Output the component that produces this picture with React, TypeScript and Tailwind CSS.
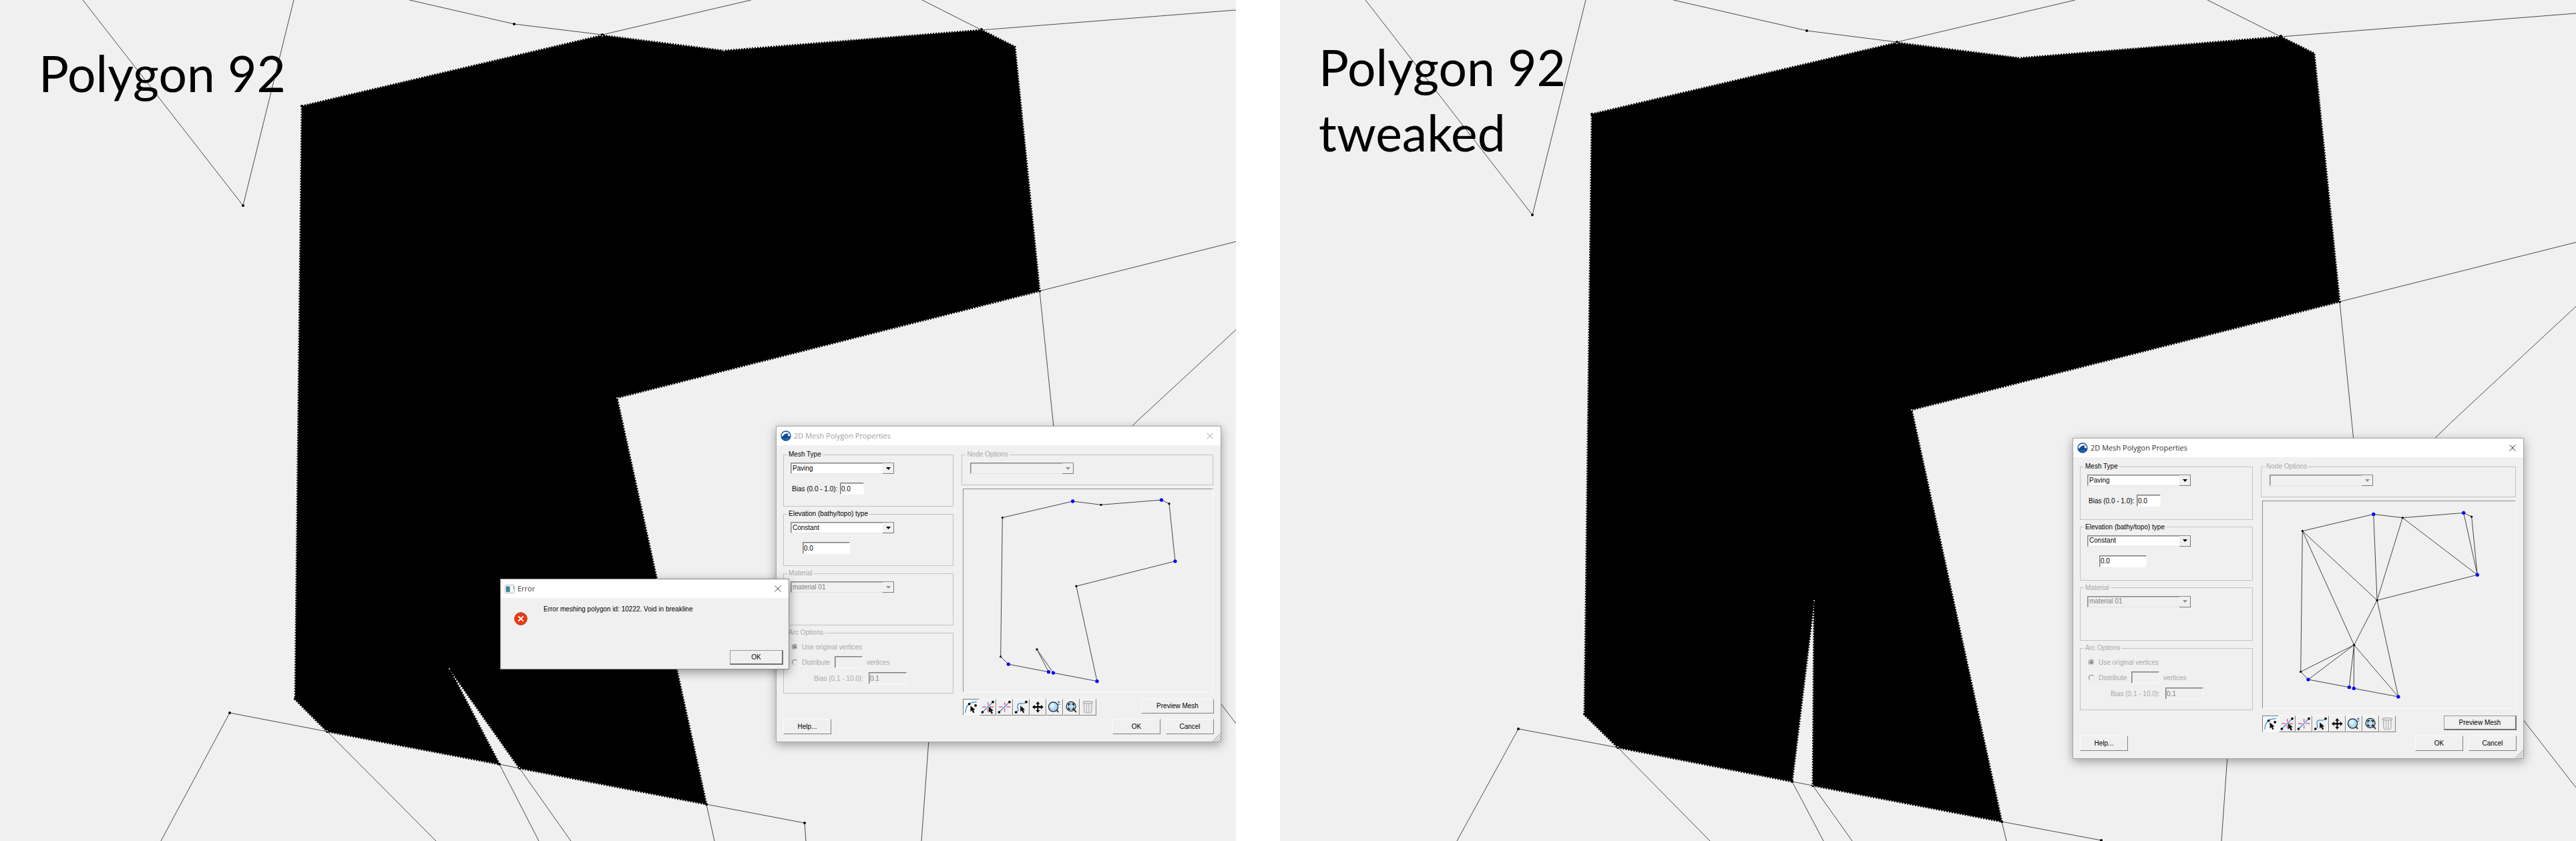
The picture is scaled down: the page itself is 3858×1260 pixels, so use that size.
import type { ReactNode } from "react";

type Pt = [number, number];

const toPoints = (pts: Pt[]) => pts.map((p) => p.join(",")).join(" ");

/* ---------- Map canvas ---------- */

type MapData = { viewBox: string; polygon: Pt[]; lines: Pt[][]; nodes: Pt[]; corners: Pt[] };

const originalMap: MapData = {
  viewBox: "0 0 1851 1260",
  polygon: [
    [452, 159], [902, 53], [1084, 76], [1470, 45], [1520, 70], [1557, 436], [924, 596],
    [1058, 1205], [778, 1151], [673, 1002], [748, 1145], [490, 1096], [442, 1048],
  ],
  lines: [
    [[124, 0], [364, 308], [440, 0]],
    [[613, 0], [770, 36], [902, 52], [1125, 0]],
    [[1381, 0], [1470, 45], [1851, 15]],
    [[1851, 362], [1557, 436], [1578, 640]],
    [[1851, 494], [1704, 630], [1694, 640]],
    [[241, 1260], [344, 1068], [490, 1096], [653, 1260]],
    [[807, 1260], [748, 1145], [778, 1151], [855, 1260]],
    [[1070, 1260], [1058, 1205], [1205, 1233], [1207, 1260]],
    [[1391, 1108], [1380, 1260]],
    [[1826, 1051], [1851, 1084]],
  ],
  nodes: [
    [364, 308], [770, 36], [902, 52], [1470, 44], [1557, 436], [344, 1068], [490, 1096],
    [748, 1145], [778, 1151], [1058, 1205], [1205, 1233], [442, 1047], [452, 159],
  ],
  corners: [[902, 54], [1084, 76], [1557, 434], [924, 596], [673, 1002], [490, 1095], [778, 1150]],
};

const tweakedMap: MapData = {
  viewBox: "0 0 1941 1260",
  polygon: [
    [467, 171], [924, 64], [1108, 87], [1499, 55], [1549, 80], [1587, 452], [946, 614],
    [1081, 1231], [798, 1177], [800, 900], [767, 1171], [506, 1120], [456, 1071],
  ],
  lines: [
    [[128, 0], [378, 322], [458, 0]],
    [[589, 0], [789, 46], [924, 63], [1191, 0]],
    [[1389, 0], [1499, 55], [1941, 20]],
    [[1941, 363], [1587, 452], [1608, 660]],
    [[1941, 459], [1757, 630], [1726, 660]],
    [[265, 1260], [357, 1092], [506, 1120], [644, 1260]],
    [[814, 1260], [767, 1171], [798, 1177], [857, 1260]],
    [[1088, 1260], [1081, 1231], [1230, 1259]],
    [[1419, 1132], [1410, 1260]],
    [[1860, 1076], [1941, 1180]],
  ],
  nodes: [
    [378, 322], [789, 46], [924, 63], [1499, 54], [1587, 452], [357, 1092], [506, 1120],
    [767, 1171], [798, 1177], [1081, 1231], [1230, 1259], [456, 1070], [467, 171],
  ],
  corners: [[924, 65], [1108, 87], [1587, 450], [946, 614], [800, 900], [506, 1119], [798, 1176]],
};

function MapCanvas({ data }: { data: MapData }) {
  return (
    <svg
      className="absolute inset-0 h-full w-full"
      viewBox={data.viewBox}
      preserveAspectRatio="xMinYMin slice"
      aria-hidden="true"
    >
      {data.lines.map((l, i) => (
        <polyline key={i} points={toPoints(l)} fill="none" stroke="#4a4a4a" strokeWidth="1" />
      ))}
      <polygon points={toPoints(data.polygon)} fill="#000" stroke="#000" strokeWidth="3" strokeDasharray="2 2" />
      {data.nodes.map(([x, y], i) => (
        <circle key={i} cx={x} cy={y} r="2" fill="#000" />
      ))}
      {data.corners.map(([x, y], i) => (
        <circle key={i} cx={x} cy={y} r="1" fill="#f0f0f0" />
      ))}
    </svg>
  );
}

/* ---------- Preview drawings ---------- */

type PreviewData = { viewBox: string; lines: Pt[][]; blue: Pt[]; black: Pt[] };

const outlinePreview: PreviewData = {
  viewBox: "0 0 1125 912",
  lines: [[
    [176, 127], [494, 53], [622, 69], [895, 47], [930, 64], [957, 324], [510, 437], [604, 867],
    [406, 829], [332, 723], [385, 825], [203, 790], [168, 756], [176, 127],
  ]],
  blue: [[494, 53], [895, 47], [957, 324], [604, 867], [406, 829], [385, 825], [203, 790]],
  black: [[176, 127], [622, 69], [930, 64], [510, 437], [332, 723], [168, 756]],
};

const meshPreview: PreviewData = {
  viewBox: "0 0 1140 924",
  lines: [
    [
      [179, 129], [500, 53], [631, 69], [907, 47], [943, 64], [969, 327], [516, 442], [612, 878],
      [411, 840], [412, 644], [390, 835], [205, 800], [171, 765], [179, 129],
    ],
    [[179, 129], [516, 442], [500, 53]],
    [[516, 442], [631, 69], [969, 327], [907, 47]],
    [[516, 442], [412, 644], [179, 129]],
    [[171, 765], [412, 644], [205, 800]],
    [[412, 644], [612, 878]],
  ],
  blue: [[500, 53], [907, 47], [969, 327], [612, 878], [411, 840], [390, 835], [205, 800]],
  black: [[179, 129], [631, 69], [943, 64], [516, 442], [412, 644], [171, 765]],
};

function Preview({ data }: { data: PreviewData }) {
  return (
    <svg className="block h-full w-full" viewBox={data.viewBox} role="img" aria-label="Polygon preview">
      {data.lines.map((l, i) => (
        <polyline key={i} points={toPoints(l)} fill="none" stroke="#444" strokeWidth="3" />
      ))}
      {data.black.map(([x, y], i) => (
        <circle key={i} cx={x} cy={y} r="5" fill="#000" />
      ))}
      {data.blue.map(([x, y], i) => (
        <circle key={i} cx={x} cy={y} r="8" fill="#0000ff" />
      ))}
    </svg>
  );
}

/* ---------- Icons ---------- */

function AppIcon() {
  return (
    <svg className="size-4 shrink-0" viewBox="0 0 48 48" aria-hidden="true">
      <circle cx="24" cy="24" r="21" fill="#fff" stroke="#0f4f9b" strokeWidth="4" />
      <path d="M3 29C12 27 14 15 25 14C30 13 35 14 37 17C31 18 30 22 34 24C38 26 42 25 45 25C45 30 43 35 40 38H8C5 35 3 32 3 29Z" fill="#0f4f9b" />
      <path d="M10 39C18 36 30 41 38 39C30 46 18 46 10 39Z" fill="#0f4f9b" />
    </svg>
  );
}

function WindowIcon() {
  return (
    <svg className="h-[13px] w-[15px] shrink-0" viewBox="0 0 45 39" aria-hidden="true">
      <rect x="1.5" y="1.5" width="42" height="36" rx="3" fill="#eef3f7" stroke="#b4bfc8" strokeWidth="3" />
      <rect x="6" y="8" width="17" height="25" fill="#3d8f8b" />
      <rect x="6" y="8" width="8" height="12" fill="#3f6fb5" />
      <rect x="27" y="6" width="8" height="27" fill="#fff" />
      <rect x="38" y="8" width="3" height="12" fill="#6aa6ab" />
    </svg>
  );
}

function CloseIcon() {
  return (
    <svg className="size-[10px]" viewBox="0 0 10 10" aria-hidden="true">
      <path d="M0.5 0.5L9.5 9.5M9.5 0.5L0.5 9.5" stroke="currentColor" strokeWidth="1" />
    </svg>
  );
}

function Cursor({ x, y }: { x: number; y: number }) {
  return <path transform={`translate(${x} ${y})`} d="M0 0V30L7 24L13 36L20 33L14 21L23 20Z" fill="#111" />;
}

const cross = <path d="M10 36H28M47 36H66M38 13V28M38 44V60" stroke="#f0397a" strokeWidth="4" />;
const segment = (
  <>
    <path d="M11 62L62 12" stroke="#2b87cf" strokeWidth="4" />
    <circle cx="11" cy="62" r="6" />
    <circle cx="62" cy="12" r="6" />
  </>
);

const tools: { label: string; art: ReactNode }[] = [
  {
    label: "Select vertices",
    art: (
      <>
        <path d="M10 65C10 30 28 12 65 12" fill="none" stroke="#2b93dd" strokeWidth="4" />
        <circle cx="28" cy="22" r="6" />
        <circle cx="59" cy="29" r="6" />
        <Cursor x={34} y={30} />
      </>
    ),
  },
  { label: "Select split point", art: (<>{cross}{segment}<Cursor x={42} y={34} /></>) },
  { label: "Add split point", art: (<>{cross}{segment}</>) },
  {
    label: "Select arc",
    art: (
      <>
        <path d="M12 62C36 54 8 34 24 22C36 13 46 30 62 12" fill="none" stroke="#2b87cf" strokeWidth="4" />
        <circle cx="12" cy="62" r="6" />
        <circle cx="62" cy="12" r="6" />
        <Cursor x={33} y={30} />
      </>
    ),
  },
  {
    label: "Pan",
    art: (
      <path d="M37 10L47 22H40V33H52V26L64 37L52 48V41H40V52H47L37 64L27 52H34V41H22V48L10 37L22 26V33H34V22H27Z" />
    ),
  },
  {
    label: "Zoom",
    art: (
      <>
        <path d="M46 50L56 62" stroke="#444" strokeWidth="7" />
        <circle cx="31" cy="36" r="23" fill="#a9d8f8" stroke="#222" strokeWidth="4" />
        <circle cx="27" cy="30" r="12" fill="#d7effd" />
        <path d="M52 13H64M58 7V19M52 24H64" stroke="#1d56c4" strokeWidth="3" />
      </>
    ),
  },
  {
    label: "Frame",
    art: (
      <>
        <path d="M50 49L62 62" stroke="#444" strokeWidth="7" />
        <circle cx="36" cy="34" r="23" fill="#b9e0fa" stroke="#222" strokeWidth="4" />
        <path d="M24 31V22H33M40 22H49V31M49 38V47H40M33 47H24V38" fill="none" stroke="#111" strokeWidth="5" />
      </>
    ),
  },
  {
    label: "Delete",
    art: (
      <>
        <path d="M16 15L19 62C24 67 50 67 55 62L58 15Z" fill="#d4d4d4" stroke="#999" strokeWidth="2" />
        <path d="M27 20V58M37 20V60M47 20V58" stroke="#fff" strokeWidth="5" />
        <path d="M31 20V58M42 20V60" stroke="#a4a4a4" strokeWidth="3" />
        <ellipse cx="37" cy="14" rx="25" ry="6" fill="#e4e4e4" stroke="#999" strokeWidth="3" />
      </>
    ),
  },
];

/* ---------- Form controls ---------- */

const sunken =
  "border border-t-[#808080] border-l-[#808080] border-r-[#fafafa] border-b-[#fafafa] shadow-[inset_1px_1px_0_#b5b5b5]";

function Dropdown({ label, value, disabled }: { label: string; value: string; disabled?: boolean }) {
  return (
    <div className="relative h-[17px] w-[155px]">
      <select
        aria-label={label}
        disabled={disabled}
        defaultValue={value}
        className="block h-full w-full appearance-none border border-[#8a8a8a] border-b-[#e4e4e4] bg-white pl-[2px] text-[10px] leading-[14px] text-black shadow-[inset_1px_1px_0_#b5b5b5] disabled:bg-[#f0f0f0] disabled:text-[#808080] disabled:opacity-100"
      >
        <option value={value}>{value}</option>
      </select>
      <span className="pointer-events-none absolute top-[1px] right-0 bottom-0 flex w-[17px] items-center justify-center border-r border-b border-[#7a7a7a] bg-[#f0f0f0]">
        <svg className={disabled ? "h-1 w-[7px] text-[#8f8f8f]" : "h-1 w-[7px] text-black"} viewBox="0 0 7 4" aria-hidden="true">
          <path d="M0 0H7L3.5 4Z" fill="currentColor" />
        </svg>
      </span>
    </div>
  );
}

function TextBox({ id, label, value, width, disabled }: { id: string; label?: string; value: string; width: string; disabled?: boolean }) {
  return (
    <input
      id={id}
      aria-label={label}
      type="text"
      defaultValue={value}
      disabled={disabled}
      className={`h-[18px] bg-white pl-px text-[10px] leading-[16px] text-black disabled:bg-[#f0f0f0] disabled:text-[#808080] ${sunken} ${width}`}
    />
  );
}

function Radio({ name, checked }: { name: string; checked?: boolean }) {
  return (
    <input
      type="radio"
      name={name}
      disabled
      defaultChecked={checked}
      className="ml-[2px] size-[9px] appearance-none rounded-full border border-[#808080] border-r-[#e2e2e2] border-b-[#e2e2e2] checked:bg-[#8a8a8a] checked:shadow-[inset_0_0_0_1px_#f0f0f0]"
    />
  );
}

function Group({ title, disabled, size, children }: { title: string; disabled?: boolean; size: string; children: ReactNode }) {
  return (
    <fieldset className={`min-h-0 min-w-0 border border-[#c3c3c3] pl-[10px] ${size}`}>
      <legend className={`-ml-[5px] px-[2px] leading-[12px] ${disabled ? "text-[#a8a8a8]" : "text-black"}`}>
        {title}
      </legend>
      {children}
    </fieldset>
  );
}

function PushButton({ children, strong, size }: { children: ReactNode; strong?: boolean; size: string }) {
  return (
    <button
      type="button"
      className={`flex items-center justify-center bg-[#f0f0f0] text-[10px] leading-[12px] text-black ${size} ${
        strong
          ? "border border-r-2 border-b-2 border-[#9a9a9a] border-r-[#707070] border-b-[#707070]"
          : "border border-[#fafafa] border-r-[#808080] border-b-[#808080]"
      }`}
    >
      {children}
    </button>
  );
}

function TitleBar({ icon, title, tone }: { icon: ReactNode; title: string; tone: string }) {
  return (
    <header className={`flex h-7 shrink-0 items-center bg-white pr-[11px] pl-[6px] ${tone}`}>
      {icon}
      <h2 className="ml-1 flex-1 font-['Open_Sans',sans-serif] text-[11px] leading-[16px]">{title}</h2>
      <button type="button" aria-label="Close">
        <CloseIcon />
      </button>
    </header>
  );
}

/* ---------- Dialogs ---------- */

function MeshDialog({ id, place, tone, preview, previewFocused }: { id: string; place: string; tone: string; preview: PreviewData; previewFocused?: boolean }) {
  const columns = "grid grid-cols-[255fr_376fr] gap-x-[12px] pr-px";
  return (
    <section
      role="dialog"
      aria-label="2D Mesh Polygon Properties"
      className={`absolute flex flex-col border border-[#a5a5a5] bg-[#f0f0f0] text-[10px] shadow-[0_4px_14px_rgba(0,0,0,0.35)] ${place}`}
    >
      <TitleBar icon={<AppIcon />} title="2D Mesh Polygon Properties" tone={tone} />
      <div className="flex min-h-0 flex-1 flex-col px-[10px] pt-2 pb-[11px]">
        <div className={`min-h-0 flex-1 ${columns}`}>
          <div className="flex min-h-0 flex-col gap-[5px]">
            <Group title="Mesh Type" size="flex-[84]">
              <div className="pt-[6px]">
                <Dropdown label="Mesh Type" value="Paving" />
              </div>
              <div className="mt-[13px] flex items-center gap-[4px] pl-[2px]">
                <label htmlFor={`${id}-bias`} className="w-[68px] whitespace-nowrap text-black">Bias (0.0 - 1.0):</label>
                <TextBox id={`${id}-bias`} value="0.0" width="w-[36px]" />
              </div>
            </Group>
            <Group title="Elevation (bathy/topo) type" size="flex-[84]">
              <div className="pt-[6px]">
                <Dropdown label="Elevation type" value="Constant" />
              </div>
              <div className="mt-[13px] flex pl-[18px]">
                <TextBox id={`${id}-elevation`} label="Elevation" value="0.0" width="w-[71px]" />
              </div>
            </Group>
            <Group title="Material" disabled size="flex-[84]">
              <div className="pt-[6px]">
                <Dropdown label="Material" value="material 01" disabled />
              </div>
            </Group>
            <Group title="Arc Options" disabled size="flex-[97]">
              <div className="flex pt-[8px] text-[#a8a8a8]">
                <label className="flex h-[14px] items-center gap-[6px]">
                  <Radio name={`${id}-arc`} checked />
                  Use original vertices
                </label>
              </div>
              <div className="mt-[7px] flex items-center text-[#a8a8a8]">
                <label className="flex w-[66px] items-center gap-[6px]">
                  <Radio name={`${id}-arc`} />
                  Distribute
                </label>
                <TextBox id={`${id}-count`} label="Vertex count" value="" width="w-[42px]" disabled />
                <label htmlFor={`${id}-count`} className="ml-[6px]">vertices</label>
              </div>
              <div className="mt-[6px] flex items-center pl-[35px] text-[#a8a8a8]">
                <label htmlFor={`${id}-arcbias`} className="w-[82px] whitespace-nowrap">Bias (0.1 - 10.0):</label>
                <TextBox id={`${id}-arcbias`} value="0.1" width="w-[57px]" disabled />
              </div>
            </Group>
          </div>
          <div className="flex min-h-0 flex-col gap-[5px] pb-[2px]">
            <Group title="Node Options" disabled size="h-[52px]">
              <div className="pt-[6px] pl-[2px]">
                <Dropdown label="Node Options" value="" disabled />
              </div>
            </Group>
            <div className="ml-[2px] min-h-0 flex-1 border border-t-[#8c8c8c] border-r-[#fafafa] border-b-[#fafafa] border-l-[#8c8c8c]">
              <Preview data={preview} />
            </div>
          </div>
        </div>
        <div className={`mt-2 ${columns}`}>
          <span />
          <div className="-mr-px flex items-start justify-between pl-[2px]">
            <div className="flex" role="toolbar" aria-label="Preview tools">
              {tools.map((t, i) => (
                <button
                  key={t.label}
                  type="button"
                  aria-label={t.label}
                  className={`size-[25px] border ${
                    i === 0
                      ? "border-[#f4f4f4] border-t-[#777] border-l-[#777] bg-[#f8f8f8]"
                      : "border-[#fafafa] border-r-[#808080] border-b-[#808080]"
                  }`}
                >
                  <svg className="block h-full w-full" viewBox="0 0 75 75" aria-hidden="true">{t.art}</svg>
                </button>
              ))}
            </div>
            <PushButton size="h-[22px] w-[109px]" strong={previewFocused}>Preview Mesh</PushButton>
          </div>
        </div>
        <div className="mt-[5px] flex">
          <PushButton size="h-[23px] w-[72px]">Help...</PushButton>
          <div className="ml-auto flex gap-2">
            <PushButton size="h-[23px] w-[72px]">OK</PushButton>
            <PushButton size="h-[23px] w-[72px]">Cancel</PushButton>
          </div>
        </div>
      </div>
      <svg className="absolute right-0 bottom-0 size-3" viewBox="0 0 12 12" aria-hidden="true">
        <path d="M0 12L12 0M4 12L12 4M8 12L12 8" stroke="#8a8a8a" strokeWidth="1" />
      </svg>
    </section>
  );
}

function ErrorDialog() {
  return (
    <section
      role="alertdialog"
      aria-label="Error"
      className="absolute top-[867px] left-[749px] flex h-[136px] w-[433px] flex-col border border-[#8a8a8a] bg-[#f0f0f0] shadow-[0_4px_14px_rgba(0,0,0,0.4)]"
    >
      <TitleBar icon={<WindowIcon />} title="Error" tone="text-[#444]" />
      <div className="flex flex-1 items-start pt-[11px] pl-5">
        <svg className="mt-[10px] size-5" viewBox="0 0 60 60" aria-hidden="true">
          <circle cx="30" cy="30" r="28" fill="#ee3a17" stroke="#c62f12" strokeWidth="3" />
          <path d="M19 19L41 41M41 19L19 41" stroke="#fff" strokeWidth="6" />
        </svg>
        <p className="ml-[24px] text-[10px] leading-[12px] text-black">
          Error meshing polygon id: 10222. Void in breakline
        </p>
      </div>
      <div className="flex justify-end pr-2 pb-[6px]">
        <PushButton size="h-[22px] w-[80px]" strong>OK</PushButton>
      </div>
    </section>
  );
}

const heading = "relative pl-[58px] font-['Lato',sans-serif] text-[75px] leading-[98px] text-black";

export default function App() {
  return (
    <main className="grid min-h-screen grid-cols-[1851fr_1941fr] gap-[66px] overflow-hidden bg-white font-['Liberation_Sans',Arial,sans-serif]">
      <section className="relative overflow-hidden bg-[#f0f0f0] pt-[60px]">
        <MapCanvas data={originalMap} />
        <h1 className={heading}>Polygon 92</h1>
        <MeshDialog
          id="original"
          place="left-[1162px] top-[638px] h-[474px] w-[667px]"
          tone="text-[#a0a0a0]"
          preview={outlinePreview}
        />
        <ErrorDialog />
      </section>
      <section className="relative overflow-hidden bg-[#f0f0f0] pt-[51px]">
        <MapCanvas data={tweakedMap} />
        <h1 className={heading}>
          Polygon 92
          <br />
          tweaked
        </h1>
        <MeshDialog
          id="tweaked"
          place="left-[1187px] top-[656px] h-[481px] w-[676px]"
          tone="text-[#333]"
          preview={meshPreview}
          previewFocused
        />
      </section>
    </main>
  );
}
